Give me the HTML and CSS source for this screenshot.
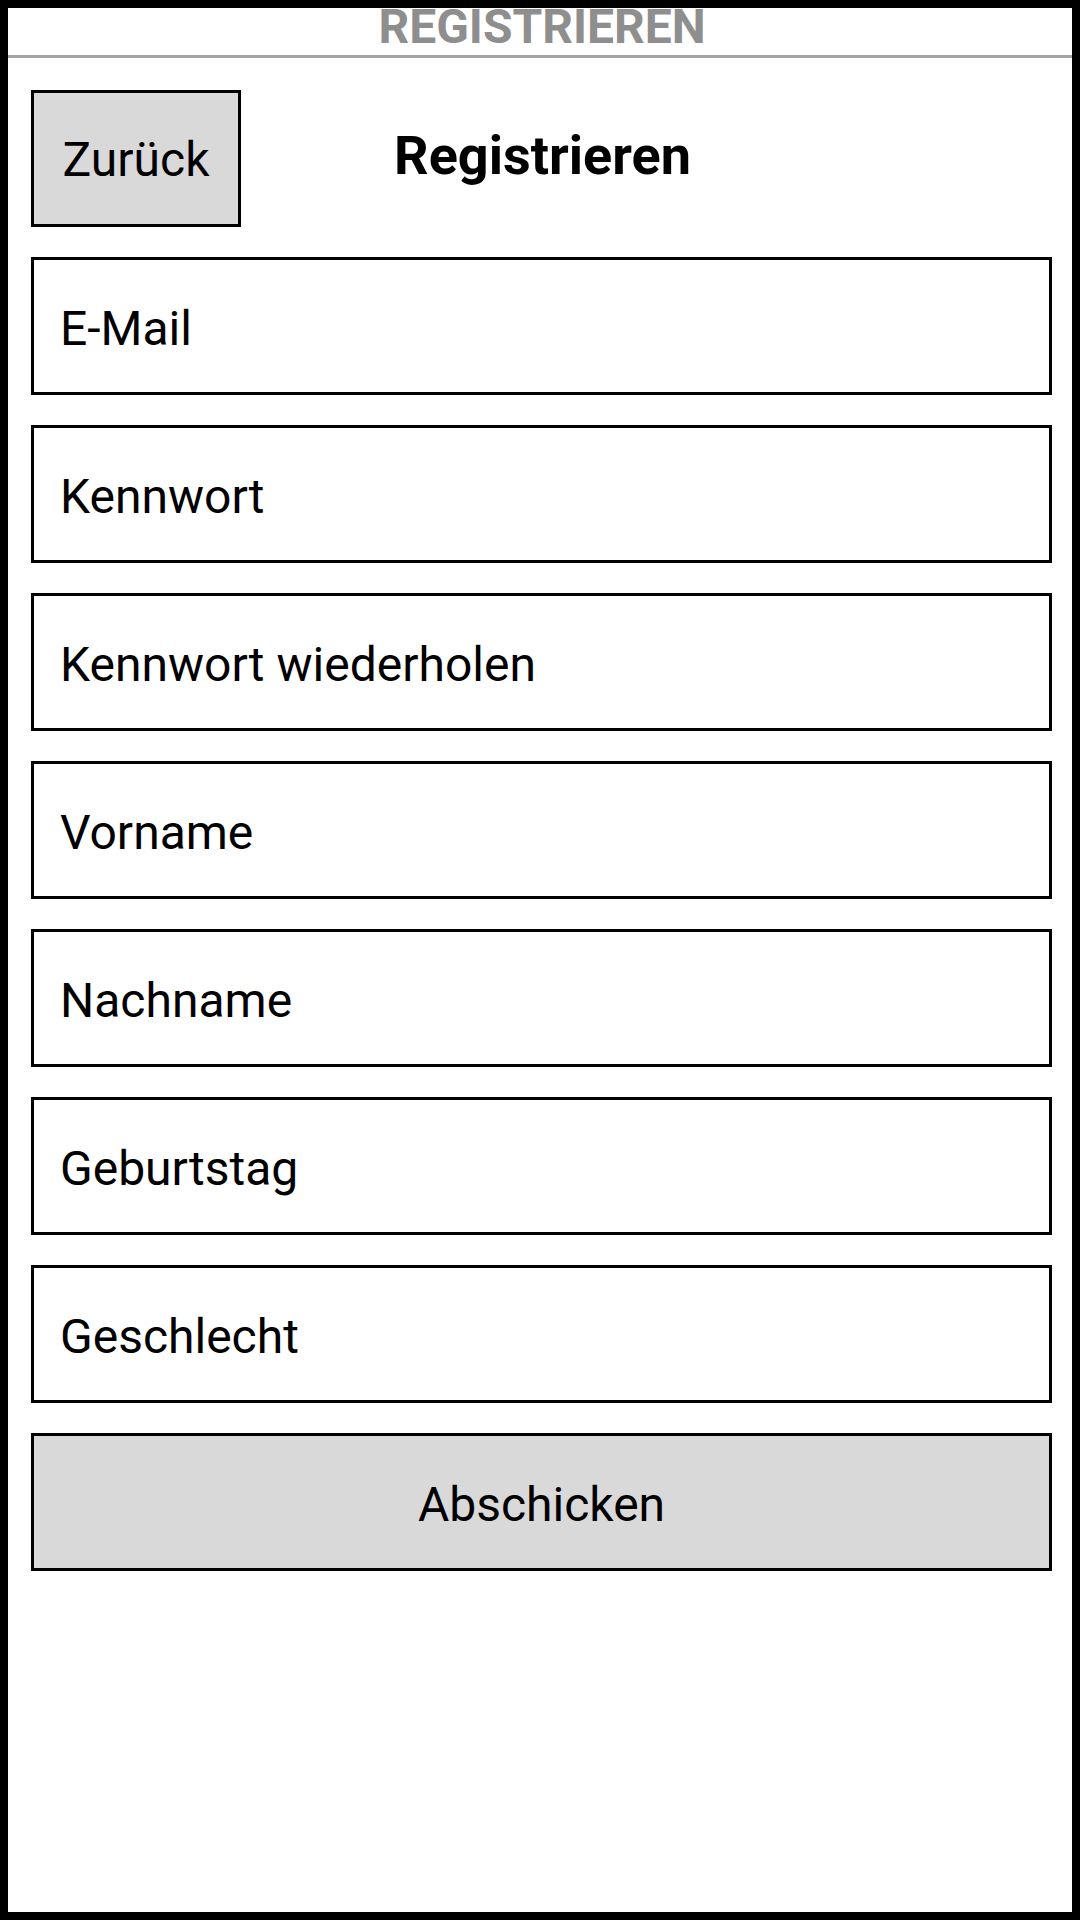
FILE: index.html
```html
<!DOCTYPE html>
<html lang="de">
<head>
<meta charset="utf-8">
<title>Registrieren</title>
<link rel="stylesheet" href="styles.css">
</head>
<body>
<div class="frame">
  <div class="topbar">REGISTRIEREN</div>
  <div class="content">
    <div class="header-row">
      <div class="btn back">Zurück</div>
      <div class="title">Registrieren</div>
      <div class="spacer"></div>
    </div>
    <div class="form">
      <div class="field">E-Mail</div>
      <div class="field">Kennwort</div>
      <div class="field">Kennwort wiederholen</div>
      <div class="field">Vorname</div>
      <div class="field">Nachname</div>
      <div class="field">Geburtstag</div>
      <div class="field">Geschlecht</div>
      <div class="field submit">Abschicken</div>
    </div>
  </div>
</div>
</body>
</html>
```
FILE: styles.css
```css
html, body {
  margin: 0;
  padding: 0;
  background: #fff;
}
body {
  font-family: Roboto, "Liberation Sans", sans-serif;
  color: #000;
}
.frame {
  box-sizing: border-box;
  width: 1080px;
  height: 1920px;
  border: 8px solid #000;
  background: #fff;
}
.topbar {
  box-sizing: border-box;
  height: 50px;
  padding-bottom: 9px;
  border-bottom: 3px solid #a3a3a3;
  text-align: center;
  font-size: 48px;
  font-weight: 700;
  line-height: 38px;
  color: #8e8e8e;
  padding-left: 4px;
}
.content {
  padding: 32px 20px 0 23px;
}
.header-row {
  display: grid;
  grid-template-columns: 1fr auto 1fr;
  align-items: center;
  height: 137px;
  margin-bottom: 30px;
}
.btn {
  box-sizing: border-box;
  border: 3px solid #000;
  background: #d9d9d9;
  font-size: 48px;
  display: flex;
  align-items: center;
  justify-content: center;
}
.back {
  width: 210px;
  height: 137px;
  justify-self: start;
  padding-top: 2px;
}
.title {
  font-size: 54px;
  font-weight: 700;
  line-height: 64px;
  margin-bottom: 6px;
  padding-left: 2px;
}
.form {
  display: flex;
  flex-direction: column;
  gap: 30px;
}
.field {
  box-sizing: border-box;
  height: 138px;
  border: 3px solid #000;
  padding: 4px 0 0 26px;
  display: flex;
  align-items: center;
  font-size: 48px;
}
.submit {
  background: #d9d9d9;
  justify-content: center;
  padding-left: 0;
}
```
